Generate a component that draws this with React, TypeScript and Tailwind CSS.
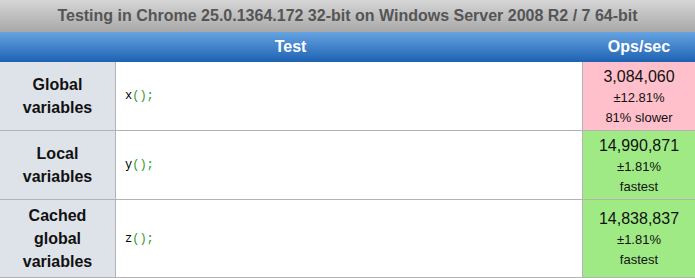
import React from "react";

const rows = [
  { label: ["Global", "variables"], fn: "x", hz: "3,084,060", rme: "±12.81%", note: "81% slower", bg: "bg-[#ffc0cb]" },
  { label: ["Local", "variables"], fn: "y", hz: "14,990,871", rme: "±1.81%", note: "fastest", bg: "bg-[#9fea85]" },
  { label: ["Cached", "global", "variables"], fn: "z", hz: "14,838,837", rme: "±1.81%", note: "fastest", bg: "bg-[#9fea85]" },
];

export default function App() {
  return (
    <div className="w-[695px] h-[278px] overflow-hidden bg-white" style={{ fontFamily: '"Liberation Sans", Arial, sans-serif' }}>
      <div className="h-[32px] flex items-center justify-center bg-gradient-to-b from-[#d6d6d6] to-[#a8a8a8] text-[#555] text-[16px] font-bold">
        Testing in Chrome 25.0.1364.172 32-bit on Windows Server 2008 R2 / 7 64-bit
      </div>
      <div className="h-[30px] grid grid-cols-[583px_1fr] bg-gradient-to-b from-[#65a3e1] to-[#1c62b2] text-white text-[16px] font-bold">
        <div className="flex items-center justify-center pr-[2px]">Test</div>
        <div className="flex items-center justify-center">Ops/sec</div>
      </div>
      {rows.map((r, i) => (
        <div key={i} className="grid grid-cols-[116px_467px_1fr] min-h-[69px] border-b border-[#b3b3b3]">
          <div className="bg-[#dee3ea] border-r border-[#b3b3b3] flex flex-col items-center justify-center py-[4px] text-[16px] font-bold text-[#111] leading-[23px]">
            {r.label.map((l) => (
              <div key={l}>{l}</div>
            ))}
          </div>
          <div className="border-r border-[#b3b3b3] flex items-center pl-[9px] text-[12px]" style={{ fontFamily: '"Liberation Mono", "Courier New", monospace' }}>
            <span className="text-black">{r.fn}</span>
            <span className="text-[#2a9a2a]">();</span>
          </div>
          <div className={`${r.bg} flex flex-col items-center justify-center text-[#111]`}>
            <div className="text-[16px] leading-[22px]">{r.hz}</div>
            <div className="text-[13px] leading-[20px]">{r.rme}</div>
            <div className="text-[13px] leading-[19px]">{r.note}</div>
          </div>
        </div>
      ))}
    </div>
  );
}
